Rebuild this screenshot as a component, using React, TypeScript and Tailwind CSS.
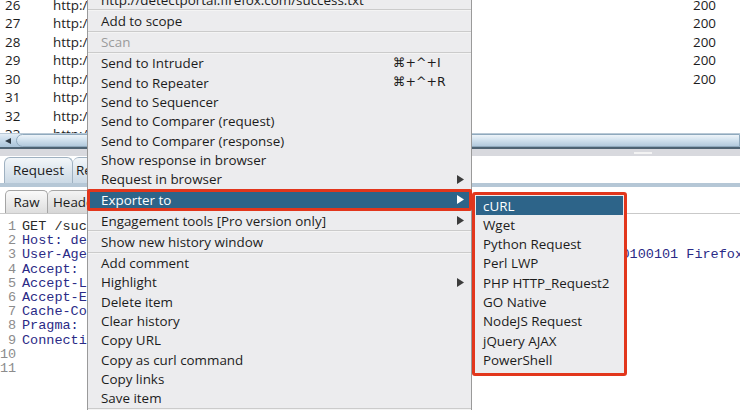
import React from 'react';

const historyRows = [
  { n: 26, status: '200' },
  { n: 27, status: '200' },
  { n: 28, status: '200' },
  { n: 29, status: '200' },
  { n: 30, status: '200' },
  { n: 31, status: '' },
  { n: 32, status: '' },
  { n: 33, status: '' },
];

const codeLines = [
  'GET /success.txt HTTP/1.1',
  'Host: detectportal.firefox.com',
  'User-Agent: Mozilla/5.0 (Macintosh; Intel Mac OS X 10.14; rv:69.0) Gecko/20100101 Firefox/69.0',
  'Accept: */*',
  'Accept-Language: en-US,en;q=0.5',
  'Accept-Encoding: gzip, deflate',
  'Cache-Control: no-cache',
  'Pragma: no-cache',
  'Connection: close',
  '',
  '',
];

type MenuEntry =
  | { kind: 'sep' }
  | { kind: 'item'; label: string; shortcut?: string; arrow?: boolean; disabled?: boolean; active?: boolean };

const menu: MenuEntry[] = [
  { kind: 'item', label: 'http://detectportal.firefox.com/success.txt' },
  { kind: 'sep' },
  { kind: 'item', label: 'Add to scope' },
  { kind: 'sep' },
  { kind: 'item', label: 'Scan', disabled: true },
  { kind: 'sep' },
  { kind: 'item', label: 'Send to Intruder', shortcut: '⌘+^+I' },
  { kind: 'item', label: 'Send to Repeater', shortcut: '⌘+^+R' },
  { kind: 'item', label: 'Send to Sequencer' },
  { kind: 'item', label: 'Send to Comparer (request)' },
  { kind: 'item', label: 'Send to Comparer (response)' },
  { kind: 'item', label: 'Show response in browser' },
  { kind: 'item', label: 'Request in browser', arrow: true },
  { kind: 'item', label: 'Exporter to', arrow: true, active: true },
  { kind: 'item', label: 'Engagement tools [Pro version only]', arrow: true },
  { kind: 'sep' },
  { kind: 'item', label: 'Show new history window' },
  { kind: 'sep' },
  { kind: 'item', label: 'Add comment' },
  { kind: 'item', label: 'Highlight', arrow: true },
  { kind: 'item', label: 'Delete item' },
  { kind: 'item', label: 'Clear history' },
  { kind: 'item', label: 'Copy URL' },
  { kind: 'item', label: 'Copy as curl command' },
  { kind: 'item', label: 'Copy links' },
  { kind: 'item', label: 'Save item' },
  { kind: 'sep' },
];

const exporters = [
  'cURL',
  'Wget',
  'Python Request',
  'Perl LWP',
  'PHP HTTP_Request2',
  'GO Native',
  'NodeJS Request',
  'jQuery AJAX',
  'PowerShell',
];

function Arrow({ white }: { white?: boolean }) {
  return (
    <svg width="7" height="9" viewBox="0 0 7 9" className="shrink-0">
      <polygon points="0,0 7,4.5 0,9" fill={white ? '#ffffff' : '#3c3c3c'} />
    </svg>
  );
}

export default function App() {
  return (
    <div className="relative w-[740px] h-[414px] overflow-hidden bg-white font-['Open_Sans',sans-serif] text-[13.4px] text-[#1c1c1c]">
      {/* proxy history table */}
      <div className="h-[133px] overflow-hidden">
        <div className="-mt-[4px]">
          {historyRows.map((r) => (
            <div key={r.n} className="flex h-[18.5px] items-center leading-none whitespace-nowrap">
              <span className="w-[53px] shrink-0 pl-[5px]">{r.n}</span>
              <span className="w-[640px] shrink-0">http://detectportal.firefox.com/success.txt</span>
              <span>{r.status}</span>
            </div>
          ))}
        </div>
      </div>

      {/* horizontal scrollbar */}
      <div className="flex h-[14px] border-t border-[#b9c9d6] bg-gradient-to-b from-[#e3edf5] via-[#c4d8e8] to-[#a9c3d8]">
        <div className="flex w-[16px] items-center justify-center">
          <svg width="6" height="6" viewBox="0 0 6 6">
            <polygon points="6,0 0,3 6,6" fill="#2e3a44" />
          </svg>
        </div>
        <div className="flex-1 rounded-l-[8px] border border-[#8fa9bd] bg-gradient-to-b from-[#eef4f9] via-[#cfe0ed] to-[#b3cadd]" />
      </div>
      <div className="h-[2px] bg-[#4e6373]" />

      {/* split pane divider */}
      <div className="flex h-[7px] justify-end bg-[#d8d9de] pr-[88px]">
        <div className="mt-[3px] h-[2px] w-[18px] bg-[#f3f3f3]" />
      </div>

      {/* request / response tabs */}
      <div className="flex h-[27px] items-end bg-white pl-[4px]">
        <div className="flex h-[26px] w-[69px] items-center justify-center rounded-t-[6px] border border-b-0 border-[#9fb1c1] bg-gradient-to-b from-[#f2f6f9] to-[#cbd9e5]">
          Request
        </div>
        <div className="flex h-[26px] w-[70px] items-center rounded-t-[6px] border border-b-0 border-l-0 border-[#9fb1c1] bg-gradient-to-b from-[#f2f6f9] to-[#cbd9e5] pl-[3px]">
          Response
        </div>
      </div>
      <div className="h-[4px] bg-[#b5c7d6]" />

      {/* raw / headers tabs */}
      <div className="flex h-[27px] items-end border-b border-[#c9c9c9] bg-white pl-[5px]">
        <div className="flex h-[23px] w-[43px] items-center justify-center rounded-t-[5px] border border-b-0 border-[#a5a5a5] bg-gradient-to-b from-[#fafafa] to-[#dedede]">
          Raw
        </div>
        <div className="flex h-[23px] w-[70px] items-center rounded-t-[5px] border border-b-0 border-l-0 border-[#a5a5a5] bg-gradient-to-b from-[#f3f3f3] to-[#d6d6d6] pl-[5px]">
          Headers
        </div>
      </div>

      {/* raw request editor */}
      <div className="pt-[6px] font-['Liberation_Mono',monospace] text-[13.5px] leading-[14.2px]">
        {codeLines.map((line, i) => (
          <div key={i} className="flex whitespace-pre">
            <span className="w-[16px] shrink-0 text-right text-[#8c8c8c]">{i + 1}</span>
            <span className={`pl-[6px] ${i === 0 ? 'text-[#2a2a2a]' : 'text-[#2a2a86]'}`}>{line}</span>
          </div>
        ))}
      </div>

      {/* context menu */}
      <div className="absolute left-[87px] top-[-10px] w-[385px] border-x border-[#9a9a9a] bg-[#ececee]">
        {menu.map((m, i) => {
          if (m.kind === 'sep') return <div key={i} className="h-[2px] border-t border-[#cbcbcb] bg-[#f4f4f4]" />;
          if (m.active)
            return (
              <div
                key={i}
                className="-mx-px flex h-[22px] items-center rounded-[2px] border-[3px] border-[#e2361c] bg-[#2d6489] pl-[11px] pr-[5px] text-white"
              >
                <span className="flex-1">{m.label}</span>
                <Arrow white />
              </div>
            );
          return (
            <div
              key={i}
              className={`flex h-[19.3px] items-center pl-[13px] pr-[7px] ${m.disabled ? 'text-[#9b9b9b]' : ''}`}
            >
              <span className="flex-1 whitespace-nowrap">{m.label}</span>
              {m.shortcut && <span className="w-[71px] font-['DejaVu_Sans',sans-serif] text-[12.5px]">{m.shortcut}</span>}
              {m.arrow && <Arrow />}
            </div>
          );
        })}
      </div>

      {/* exporter submenu */}
      <div className="absolute left-[472px] top-[192px] h-[184px] w-[155px] rounded-[3px] border-[3px] border-[#e2361c] bg-[#ececee] p-px">
        {exporters.map((e, i) => (
          <div
            key={e}
            className={`flex h-[19.3px] items-center pl-[7px] ${i === 0 ? 'bg-[#2d6489] text-white' : ''}`}
          >
            {e}
          </div>
        ))}
      </div>
    </div>
  );
}
